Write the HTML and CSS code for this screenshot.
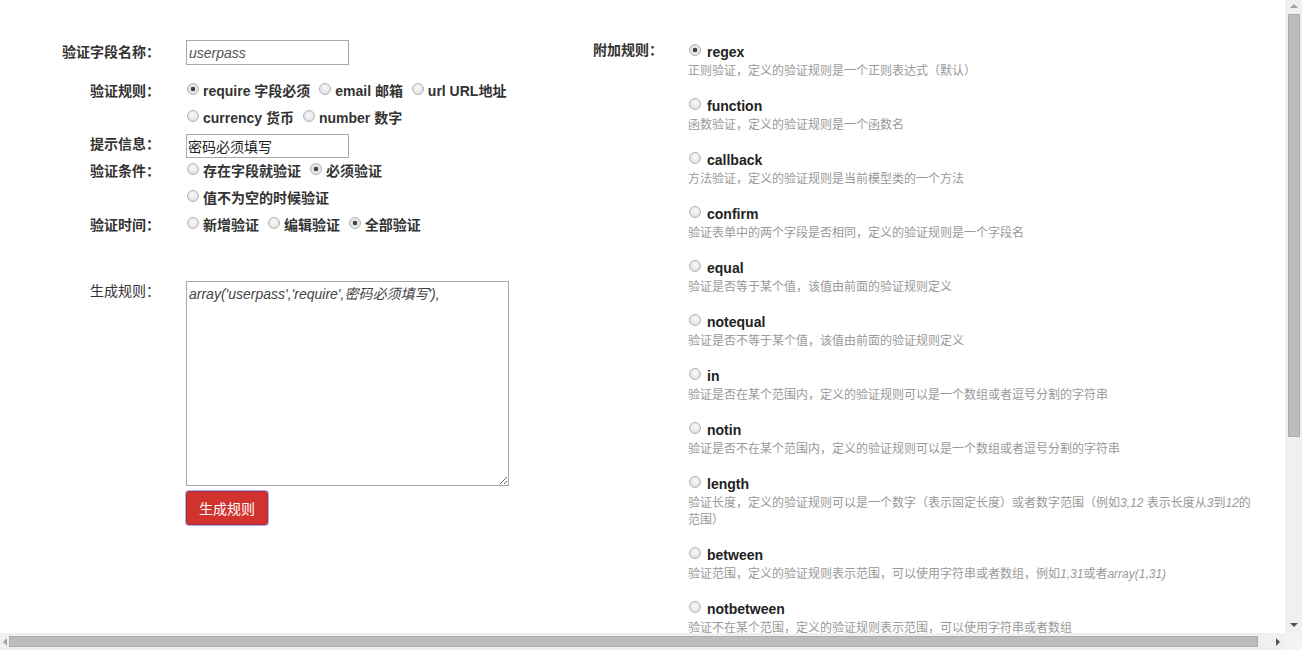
FILE: index.html
```html
<!DOCTYPE html>
<html>
<head>
	<meta charset="utf-8">
	<title>验证规则生成</title>
	<link rel="stylesheet" href="styles.css">
</head>
<body>
	<div class="window">
		<div class="viewport">
			<div class="page">

				<!-- 左侧表单 -->
				<div class="form-left">
					<div class="row row-first">
						<div class="row-label">验证字段名称：</div>
						<input class="field field-name" type="text" value="userpass">
					</div>

					<div class="row row-rule">
						<div class="row-label">验证规则：</div>
						<div class="choices">
							<div class="choice-line">
								<label><input type="radio" name="rule" checked>require 字段必须</label>
								<label><input type="radio" name="rule">email 邮箱</label>
								<label><input type="radio" name="rule">url URL地址</label>
							</div>
							<div class="choice-line">
								<label><input type="radio" name="rule">currency 货币</label>
								<label><input type="radio" name="rule">number 数字</label>
							</div>
						</div>
					</div>

					<div class="row row-msg">
						<div class="row-label">提示信息：</div>
						<input class="field field-msg" type="text" value="密码必须填写">
					</div>

					<div class="row">
						<div class="row-label">验证条件：</div>
						<div class="choices">
							<div class="choice-line">
								<label><input type="radio" name="cond">存在字段就验证</label>
								<label><input type="radio" name="cond" checked>必须验证</label>
							</div>
							<div class="choice-line">
								<label><input type="radio" name="cond">值不为空的时候验证</label>
							</div>
						</div>
					</div>

					<div class="row">
						<div class="row-label">验证时间：</div>
						<div class="choices">
							<div class="choice-line">
								<label><input type="radio" name="time">新增验证</label>
								<label><input type="radio" name="time">编辑验证</label>
								<label><input type="radio" name="time" checked>全部验证</label>
							</div>
						</div>
					</div>

					<div class="row row-result">
						<div class="row-label label-plain">生成规则：</div>
						<div class="result-box">
							<textarea class="result">array('userpass','require',密码必须填写'),</textarea>
							<button class="btn-make" type="button">生成规则</button>
						</div>
					</div>
				</div>

				<!-- 右侧附加规则 -->
				<div class="form-right">
					<div class="right-label">附加规则：</div>
					<div class="rules">
						<div class="rule">
							<label class="rule-name"><input type="radio" name="extra" checked>regex</label>
							<div class="rule-desc">正则验证，定义的验证规则是一个正则表达式（默认）</div>
						</div>
						<div class="rule">
							<label class="rule-name"><input type="radio" name="extra">function</label>
							<div class="rule-desc">函数验证，定义的验证规则是一个函数名</div>
						</div>
						<div class="rule">
							<label class="rule-name"><input type="radio" name="extra">callback</label>
							<div class="rule-desc">方法验证，定义的验证规则是当前模型类的一个方法</div>
						</div>
						<div class="rule">
							<label class="rule-name"><input type="radio" name="extra">confirm</label>
							<div class="rule-desc">验证表单中的两个字段是否相同，定义的验证规则是一个字段名</div>
						</div>
						<div class="rule">
							<label class="rule-name"><input type="radio" name="extra">equal</label>
							<div class="rule-desc">验证是否等于某个值，该值由前面的验证规则定义</div>
						</div>
						<div class="rule">
							<label class="rule-name"><input type="radio" name="extra">notequal</label>
							<div class="rule-desc">验证是否不等于某个值，该值由前面的验证规则定义</div>
						</div>
						<div class="rule">
							<label class="rule-name"><input type="radio" name="extra">in</label>
							<div class="rule-desc">验证是否在某个范围内，定义的验证规则可以是一个数组或者逗号分割的字符串</div>
						</div>
						<div class="rule">
							<label class="rule-name"><input type="radio" name="extra">notin</label>
							<div class="rule-desc">验证是否不在某个范围内，定义的验证规则可以是一个数组或者逗号分割的字符串</div>
						</div>
						<div class="rule">
							<label class="rule-name"><input type="radio" name="extra">length</label>
							<div class="rule-desc">验证长度，定义的验证规则可以是一个数字（表示固定长度）或者数字范围（例如<i>3,12</i> 表示长度从<i>3</i>到<i>12</i>的范围）</div>
						</div>
						<div class="rule">
							<label class="rule-name"><input type="radio" name="extra">between</label>
							<div class="rule-desc">验证范围，定义的验证规则表示范围，可以使用字符串或者数组，例如<i>1,31</i>或者<i>array(1,31)</i></div>
						</div>
						<div class="rule">
							<label class="rule-name"><input type="radio" name="extra">notbetween</label>
							<div class="rule-desc">验证不在某个范围，定义的验证规则表示范围，可以使用字符串或者数组</div>
						</div>
					</div>
				</div>

			</div>
		</div>

		<!-- 滚动条 -->
		<div class="vscroll">
			<div class="arrow arrow-up"></div>
			<div class="vthumb"></div>
			<div class="track-rest"></div>
			<div class="arrow arrow-down"></div>
		</div>
		<div class="hscroll">
			<div class="arrow arrow-left"></div>
			<div class="hthumb"></div>
			<div class="track-rest"></div>
			<div class="arrow arrow-right"></div>
		</div>
		<div class="corner"></div>
	</div>
</body>
</html>
```

FILE: styles.css
```css
* {
	margin: 0;
	padding: 0;
	box-sizing: border-box;
}

html, body {
	height: 100%;
	overflow: hidden;
}

body {
	font-family: "Liberation Sans", "Noto Sans CJK SC", sans-serif;
	font-size: 14px;
	color: #333;
	background: #fff;
}

.window {
	display: grid;
	grid-template-columns: 1fr 17px;
	grid-template-rows: 1fr 17px;
	width: 100vw;
	height: 100vh;
}

.viewport {
	overflow: hidden;
}

.page {
	display: flex;
	padding: 40px 0 0 50px;
}

/* 左侧 */
.form-left {
	width: 543px;
	flex-shrink: 0;
}

.row {
	display: flex;
	align-items: flex-start;
}

.row-label {
	width: 110px;
	margin-right: 26px;
	text-align: right;
	font-weight: bold;
	line-height: 27px;
	white-space: nowrap;
}

.row-first .row-label {
	line-height: 25px;
}

.row-rule {
	margin-top: 13px;
}

.row-msg {
	margin-top: 2px;
}

.row-msg .row-label {
	line-height: 20px;
}

.field {
	height: 25px;
	border: 1px solid #a9a9a9;
	font-family: "Liberation Sans", "Noto Sans CJK SC", sans-serif;
	font-size: 14px;
	outline: none;
}

.field-name {
	width: 163px;
	padding: 0 2px;
	font-style: italic;
	color: #555;
}

.field-msg {
	width: 163px;
	height: 24px;
	padding: 0 1px;
	color: #222;
}

.choice-line {
	line-height: 27px;
	white-space: nowrap;
	font-weight: bold;
}

.choice-line label {
	margin-right: 4px;
}

/* 单选框 */
input[type="radio"] {
	-webkit-appearance: none;
	appearance: none;
	width: 12px;
	height: 12px;
	border: 1px solid #b4b4b4;
	border-radius: 50%;
	background: radial-gradient(circle at 50% 40%, #fbfbfb 0, #e6e6e6 60%, #d6d6d6 100%);
	vertical-align: -1px;
	margin: 0 4px 0 1px;
	position: relative;
	top: -2px;
}

input[type="radio"]:checked {
	background: radial-gradient(circle, #444 0, #444 2px, #e8e8e8 2.6px, #dedede 100%);
}

.row-result {
	margin-top: 42px;
}

.label-plain {
	font-weight: normal;
	line-height: 20px;
}

.result-box {
	display: flex;
	flex-direction: column;
	align-items: flex-start;
}

.result {
	width: 323px;
	height: 205px;
	border: 1px solid #a9a9a9;
	padding: 2px 2px;
	font-family: "Liberation Sans", "Noto Sans CJK SC", sans-serif;
	font-size: 14px;
	font-style: italic;
	line-height: 20px;
	color: #444;
	resize: both;
	outline: none;
}

.btn-make {
	margin-top: 5px;
	width: 82px;
	height: 34px;
	background-color: #d2322d;
	border: 1px solid #a82a4a;
	border-radius: 3px;
	box-shadow: 0 0 0 1px rgba(110, 120, 220, 0.55);
	color: #fff;
	font-family: "Liberation Sans", "Noto Sans CJK SC", sans-serif;
	font-size: 14px;
}

/* 右侧 */
.form-right {
	display: flex;
	align-items: flex-start;
}

.right-label {
	width: 70px;
	margin-right: 25px;
	font-weight: bold;
	line-height: 20px;
	white-space: nowrap;
}

.rules {
	width: 574px;
	padding-top: 2px;
}

.rule {
	margin-bottom: 16px;
}

.rule-name {
	display: block;
	font-weight: bold;
	line-height: 21px;
	color: #222;
}

.rule-name input[type="radio"] {
	margin: 0 6px 0 1px;
}

.rule-desc {
	font-size: 12px;
	line-height: 17px;
	color: #999;
}

.rule-desc i {
	font-family: "Liberation Sans", sans-serif;
}

/* 滚动条 */
.vscroll {
	background: #f0f0f0;
	display: flex;
	flex-direction: column;
	align-items: center;
}

.hscroll {
	background: #f0f0f0;
	display: flex;
	align-items: center;
}

.corner {
	background: #f4f4f4;
}

.track-rest {
	flex: 1;
}

.vthumb {
	width: 12px;
	height: 423px;
	background: #bcbcbc;
	border: 1px solid #acacac;
}

.hthumb {
	width: 1249px;
	height: 11px;
	background: #bcbcbc;
	border: 1px solid #acacac;
}

.arrow {
	width: 0;
	height: 0;
	border: 4px solid transparent;
}

.arrow-up {
	border-bottom-color: #a3a3a3;
	border-top-width: 0;
	margin: 4px 0 6px;
}

.arrow-down {
	border-top-color: #505050;
	border-bottom-width: 0;
	margin: 6px 0 6px;
}

.arrow-left {
	border-right-color: #a3a3a3;
	border-left-width: 0;
	margin: 0 2px 0 3px;
}

.arrow-right {
	border-left-color: #505050;
	border-right-width: 0;
	margin: 0 5px 0 6px;
}
```
